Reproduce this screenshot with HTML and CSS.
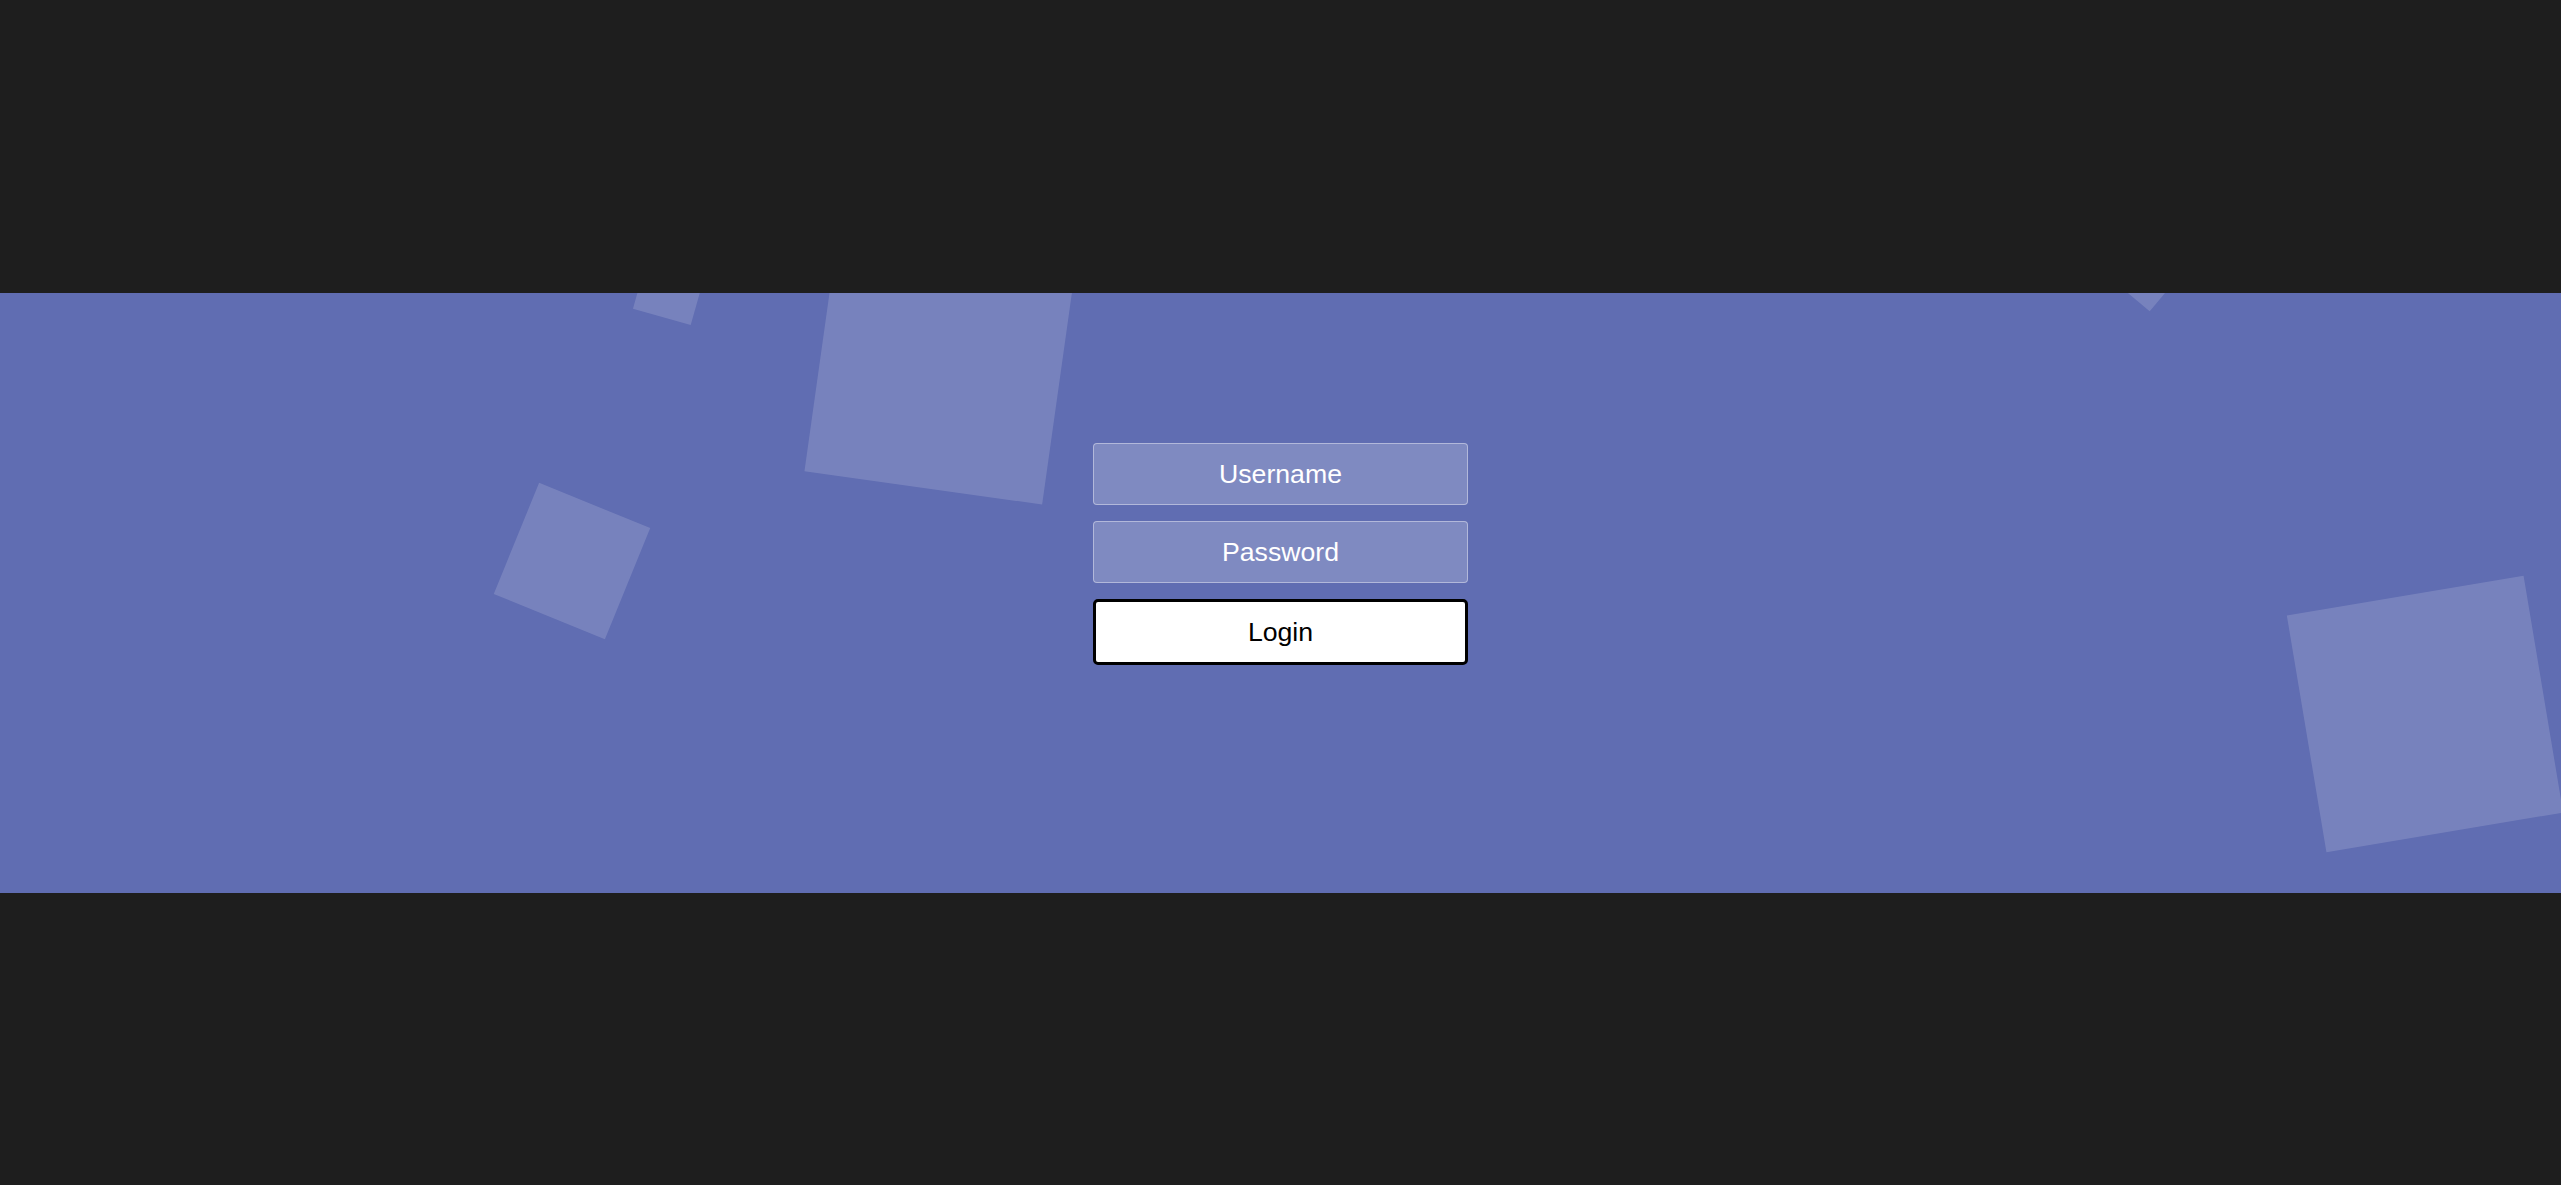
FILE: index.html
```html
<!DOCTYPE html>
<html lang="en">
<head>
<meta charset="utf-8">
<title>Login</title>
<link rel="stylesheet" href="styles.css">
</head>
<body>
  <div class="wrapper">
    <ul class="bubbles">
      <li class="sq sq-1"></li>
      <li class="sq sq-2"></li>
      <li class="sq sq-3"></li>
      <li class="sq sq-4"></li>
      <li class="sq sq-5"></li>
    </ul>
    <form class="form">
      <input class="field" type="text" placeholder="Username">
      <input class="field" type="password" placeholder="Password">
      <button class="login" type="button">Login</button>
    </form>
  </div>
</body>
</html>
```
FILE: styles.css
```css
* { box-sizing: border-box; }
html, body { margin: 0; padding: 0; }
body {
  background: #1e1e1e;
  min-height: 100vh;
  display: flex;
  flex-direction: column;
  justify-content: center;
  padding-top: 1px;
  font-family: "Liberation Sans", Arial, sans-serif;
}
.wrapper {
  position: relative;
  height: 600px;
  width: 100%;
  background: #606db2;
  overflow: hidden;
  display: flex;
  justify-content: center;
  padding-top: 150px;
}
.bubbles {
  position: absolute;
  inset: 0;
  margin: 0;
  padding: 0;
  list-style: none;
}
.sq {
  position: absolute;
  background: rgba(255, 255, 255, 0.15);
}
.sq-1 { width: 60px; height: 60px; left: 640px; top: -35px; transform: rotate(15.8deg); }
.sq-2 { width: 240px; height: 240px; left: 820px; top: -44px; transform: rotate(8deg); }
.sq-3 { width: 120px; height: 120px; left: 512px; top: 208px; transform: rotate(22.2deg); }
.sq-4 { width: 60px; height: 60px; left: 2116px; top: -54px; transform: rotate(40deg); }
.sq-5 { width: 240px; height: 240px; left: 2305px; top: 301px; transform: rotate(-9.5deg); }
.form {
  position: relative;
  z-index: 1;
  width: 375px;
  display: flex;
  flex-direction: column;
  gap: 16px;
  margin: 0;
}
.field {
  display: block;
  width: 100%;
  height: 62px;
  margin: 0;
  padding: 0 20px;
  border: 1px solid rgba(255, 255, 255, 0.4);
  border-radius: 4px;
  background: rgba(255, 255, 255, 0.2);
  color: #fff;
  font-family: "Liberation Sans", Arial, sans-serif;
  font-size: 26.67px;
  text-align: center;
  outline: none;
}
.field::placeholder { color: #fff; opacity: 1; }
.login {
  display: block;
  width: 100%;
  height: 66px;
  margin: 0;
  padding: 0;
  background: #fff;
  color: #000;
  border: 3px solid #000;
  border-radius: 5px;
  font-family: "Liberation Sans", Arial, sans-serif;
  font-size: 26.67px;
  cursor: pointer;
}
```
